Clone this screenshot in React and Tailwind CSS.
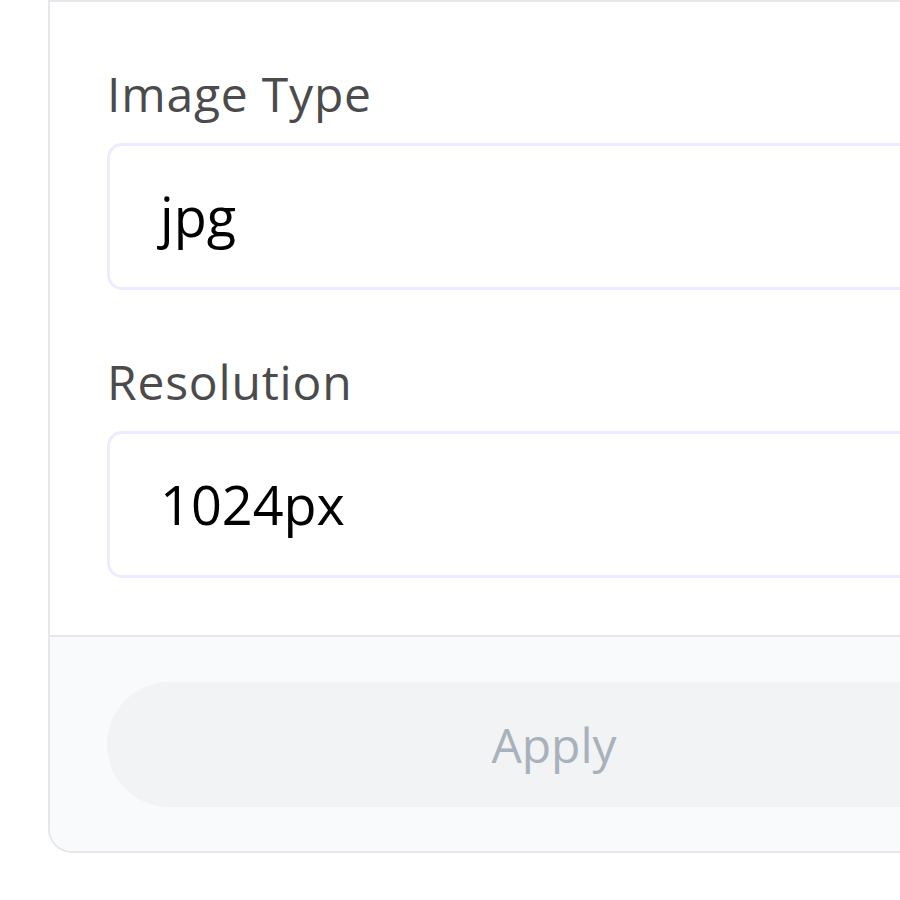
export default function App() {
  return (
    <div className="w-[900px] h-[900px] overflow-hidden bg-white font-['Open_Sans',sans-serif]">
      <div className="ml-[48px] w-[1012px] border-2 border-[#e5e7eb] rounded-b-[24px] overflow-hidden bg-white">
        <div className="px-[57px] pt-[56px] pb-[57px]">
          <label className="block text-[48px] leading-[72px] tracking-[0.8px] text-[#4b4b4b] mb-[13px]">Image Type</label>
          <div className="h-[147px] border-[3px] border-[#efeafd] rounded-[15px] flex items-center pl-[50px] text-[54px] text-black">
            jpg
          </div>
          <label className="block text-[48px] leading-[72px] tracking-[0.8px] text-[#4b4b4b] mt-[56px] mb-[13px]">Resolution</label>
          <div className="h-[147px] border-[3px] border-[#efeafd] rounded-[15px] flex items-center pl-[50px] text-[54px] text-black">
            1024px
          </div>
        </div>
        <div className="border-t-2 border-[#e5e7eb] bg-[#f9fafb] px-[57px] pt-[45px] pb-[44px]">
          <button className="w-full h-[125px] rounded-full bg-[#f2f3f5] text-[48px] font-medium text-[#a9b1ba]">
            Apply
          </button>
        </div>
      </div>
    </div>
  );
}
